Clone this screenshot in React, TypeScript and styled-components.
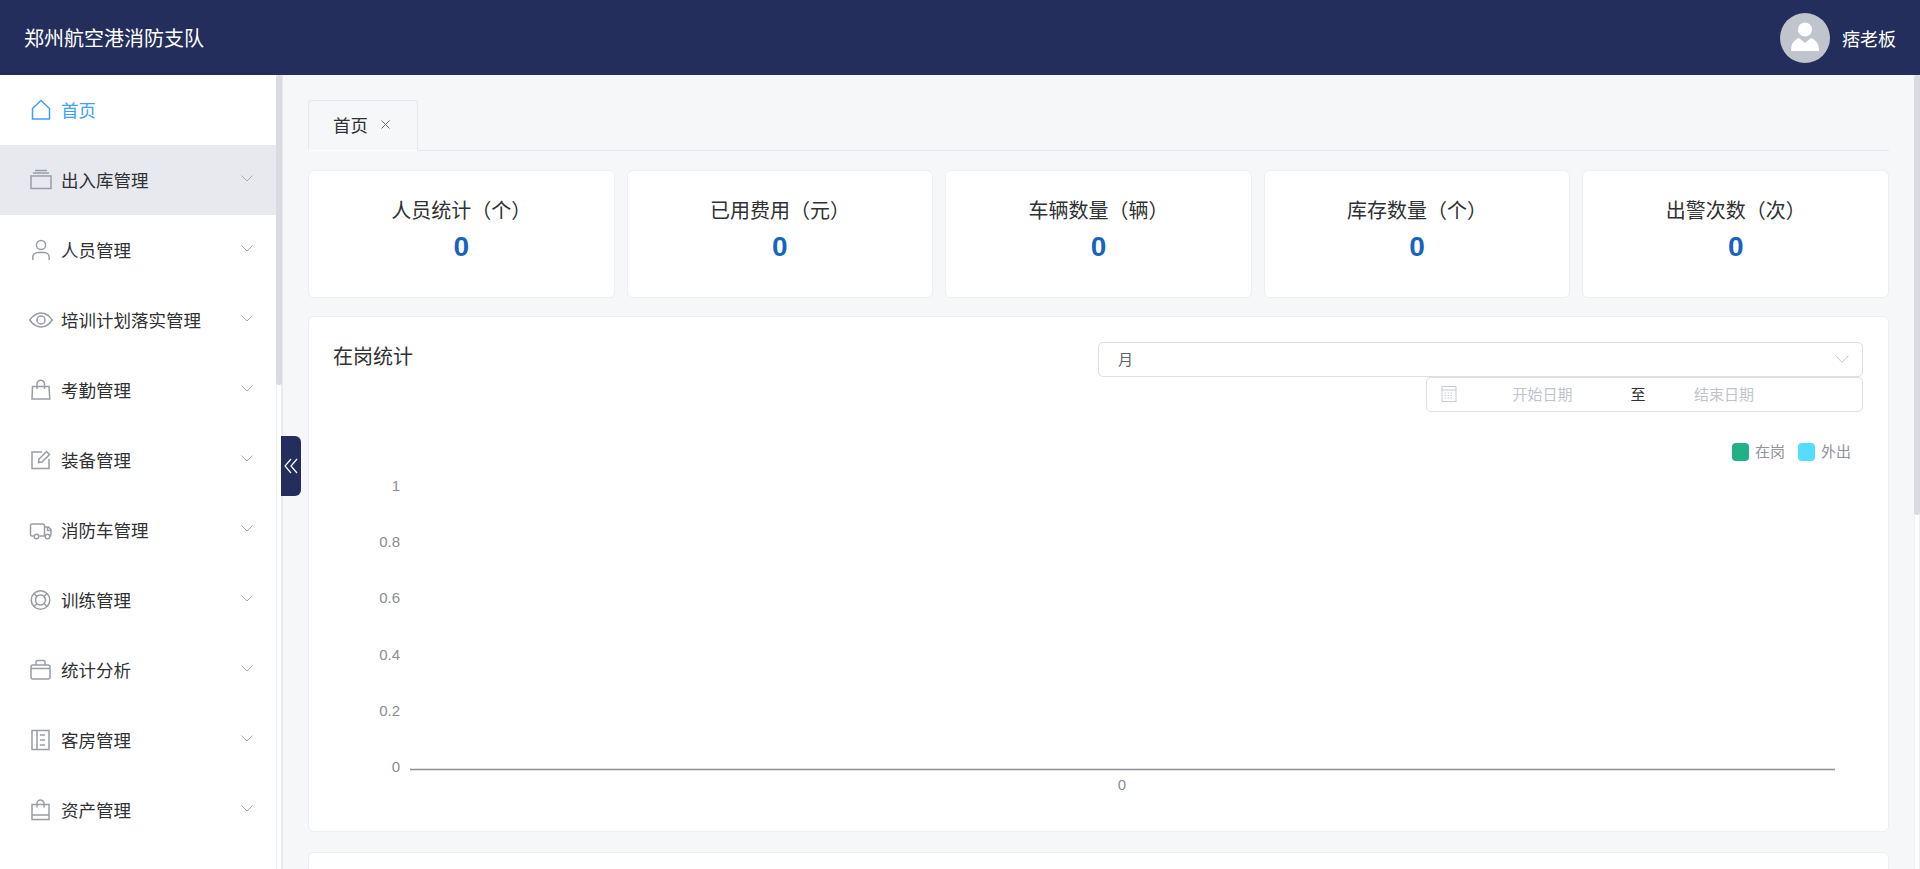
import React from "react";
import styled, { createGlobalStyle } from "styled-components";

const GlobalStyle = createGlobalStyle`
  html, body, #root {
    height: 100%;
    margin: 0;
  }
  body {
    overflow: hidden;
    font-family: "Liberation Sans", "Noto Sans CJK SC", sans-serif;
    color: #303133;
  }
  * {
    box-sizing: border-box;
  }
`;

const Svg: React.FC<{ children: React.ReactNode }> = ({ children }) => (
  <svg width={24} height={24} viewBox="0 0 24 24" fill="none" stroke="currentColor" strokeWidth="1.5">
    {children}
  </svg>
);

const icons: Record<string, React.ReactNode> = {
  home: <path d="M3.5 10.5 12 2.5l8.5 8v10.5h-17z" />,
  layers: (
    <>
      <rect x="2" y="8" width="20" height="12.500" />
      <path d="M4 5h16M6 2.500h12" />
    </>
  ),
  user: (
    <>
      <circle cx="12" cy="7" r="4.600" />
      <path d="M3.800 22v-2.500c0-3 2.400-5 5-5h6.400c2.600 0 5 2 5 5V22" />
    </>
  ),
  eye: (
    <>
      <path d="M0.800 12C4 7.300 7.700 5 12 5s8 2.300 11.200 7c-3.200 4.700-6.900 7-11.200 7S4 16.700 0.800 12z" />
      <circle cx="12" cy="12" r="4" />
    </>
  ),
  bag: (
    <>
      <path d="M3.500 8.500h16.500l.8 12.500H3z" />
      <path d="M8 11V6a3.700 3.700 0 0 1 7.500 0v5" />
    </>
  ),
  edit: (
    <>
      <path d="M13 4H3v16.500h17V11" />
      <path d="M9.500 14.500 10 11 17.500 3.500l3 3L13 14z" />
    </>
  ),
  truck: (
    <>
      <path d="M4.500 18H3a1.500 1.500 0 0 1-1.500-1.500v-9A1.500 1.500 0 0 1 3 6h11a1.500 1.500 0 0 1 1.500 1.500V18h-5" />
      <path d="M15.500 9h4l2.500 2.500v5a1.500 1.500 0 0 1-1.500 1.500M15.500 18h1M18.500 9v3.500H22" />
      <circle cx="7.500" cy="18.500" r="2.300" />
      <circle cx="18.500" cy="18.500" r="2.300" />
    </>
  ),
  buoy: (
    <>
      <circle cx="11.500" cy="12" r="9.300" />
      <circle cx="11.500" cy="12" r="5" />
      <path d="M5 5.500 8 8.500M18 5.500 15 8.500M5 18.500 8 15.500M18 18.500 15 15.500" />
    </>
  ),
  briefcase: (
    <>
      <rect x="2" y="7" width="19" height="14" rx="2" />
      <path d="M7 7V4a1.500 1.500 0 0 1 1.500-1.500h6A1.500 1.500 0 0 1 16 4v3M2 10.500h19" />
    </>
  ),
  book: (
    <>
      <rect x="3" y="2.500" width="17" height="19" />
      <path d="M8 2.500v19M11 7h5M11 12h5M11 17h5" />
    </>
  ),
  lockbag: (
    <>
      <rect x="3" y="6.500" width="17" height="15" />
      <path d="M8 9.500V5.500a3.500 3.500 0 0 1 7 0v4M3 17h17" />
    </>
  ),
};

const menu = [
  { icon: "home", label: "首页", active: true, arrow: false },
  { icon: "layers", label: "出入库管理", hover: true },
  { icon: "user", label: "人员管理" },
  { icon: "eye", label: "培训计划落实管理" },
  { icon: "bag", label: "考勤管理" },
  { icon: "edit", label: "装备管理" },
  { icon: "truck", label: "消防车管理" },
  { icon: "buoy", label: "训练管理" },
  { icon: "briefcase", label: "统计分析" },
  { icon: "book", label: "客房管理" },
  { icon: "lockbag", label: "资产管理" },
];

const stats = ["人员统计（个）", "已用费用（元）", "车辆数量（辆）", "库存数量（个）", "出警次数（次）"];
const yTicks = [
  { label: "1", y: 30 },
  { label: "0.8", y: 86 },
  { label: "0.6", y: 142 },
  { label: "0.4", y: 199 },
  { label: "0.2", y: 255 },
  { label: "0", y: 311 },
];

const App: React.FC = () => {
  return (
    <Page>
      <GlobalStyle />
      <Header>
        <Brand>郑州航空港消防支队</Brand>
        <Account>
          <Avatar>
            <svg width="50" height="50" viewBox="0 0 50 50">
              <circle cx="25" cy="16.500" r="7" fill="#fff" />
              <path d="M11 38c0-7 2.500-11 8-13l6 5 6-5c5.500 2 8 6 8 13z" fill="#fff" />
            </svg>
          </Avatar>
          <UserName>痞老板</UserName>
        </Account>
      </Header>
      <Body>
        <Sidebar>
          <MenuList>
            {menu.map((item) => (
              <MenuItem key={item.label} $active={item.active} $hover={item.hover}>
                <MenuIcon $active={item.active}>
                  <Svg>{icons[item.icon]}</Svg>
                </MenuIcon>
                <MenuLabel>{item.label}</MenuLabel>
                {item.arrow !== false && (
                  <Chevron width="12" height="7" viewBox="0 0 12 7">
                    <path d="M.5.5 6 6 11.500.5" />
                  </Chevron>
                )}
              </MenuItem>
            ))}
          </MenuList>
          <ScrollTrack>
            <ScrollThumb $height={310} />
          </ScrollTrack>
        </Sidebar>
        <Collapse>
          <svg width="14" height="16" viewBox="0 0 14 16" fill="none" stroke="#fff" strokeWidth="1.200">
            <path d="M7 1 1 8l6 7M13 1 7 8l6 7" />
          </svg>
        </Collapse>
        <Main>
          <TabStrip>
            <Tab>
              首页
              <TabClose width="9" height="9" viewBox="0 0 9 9">
                <path d="M.5.5l8 8M8.500.5l-8 8" />
              </TabClose>
            </Tab>
          </TabStrip>
          <StatRow>
            {stats.map((s) => (
              <StatCard key={s}>
                <StatTitle>{s}</StatTitle>
                <StatValue>0</StatValue>
              </StatCard>
            ))}
          </StatRow>
          <ChartCard>
            <ChartHead>
              <ChartTitle>在岗统计</ChartTitle>
              <Filters>
                <Select>
                  月
                  <svg width="14" height="8" viewBox="0 0 14 8" fill="none" stroke="#c0c4cc">
                    <path d="M.5.500 7 7.300 13.500.5" />
                  </svg>
                </Select>
                <DateRange>
                  <svg width="16" height="17" viewBox="0 0 16 17" fill="none" stroke="#c8cbd3">
                    <rect x="1" y="1.500" width="14" height="15" />
                    <path d="M1 5h14" />
                    <path d="M3.500 8h9M3.500 10.500h9M3.500 13h9" strokeDasharray="1.500 1.500" />
                  </svg>
                  <DatePlaceholder $width={171}>开始日期</DatePlaceholder>
                  <DateSep>至</DateSep>
                  <DatePlaceholder $width={152}>结束日期</DatePlaceholder>
                </DateRange>
              </Filters>
            </ChartHead>
            <Legend>
              <Swatch $color="#22b088" />
              在岗
              <Swatch $color="#55dcff" />
              外出
            </Legend>
            <ChartSvg viewBox="0 0 1528 360">
              {yTicks.map((t) => (
                <AxisText key={t.label} x="91" y={t.y} textAnchor="end">
                  {t.label}
                </AxisText>
              ))}
              <line x1="101" y1="308.500" x2="1526" y2="308.500" stroke="#8f9196" strokeWidth="1.500" />
              <AxisText x="813" y="329" textAnchor="middle">
                0
              </AxisText>
            </ChartSvg>
          </ChartCard>
          <NextCard />
        </Main>
        <ScrollTrack>
          <ScrollThumb $height={440} />
        </ScrollTrack>
      </Body>
    </Page>
  );
};

export default App;

const Page = styled.div`
  display: flex;
  flex-direction: column;
  height: 100%;
  position: relative;
`;

const Header = styled.header`
  flex: 0 0 75px;
  display: flex;
  align-items: center;
  justify-content: space-between;
  padding: 0 24px;
  background: #232e5c;
  color: #fff;
`;

const Brand = styled.div`
  font-size: 20px;
`;

const Account = styled.div`
  display: flex;
  align-items: center;
  gap: 12px;
`;

const Avatar = styled.div`
  width: 50px;
  height: 50px;
  border-radius: 50%;
  background: #c0c4cc;
  overflow: hidden;
  svg {
    display: block;
  }
`;

const UserName = styled.span`
  font-size: 18px;
`;

const Body = styled.div`
  flex: 1;
  display: flex;
  min-height: 0;
  position: relative;
`;

const Sidebar = styled.nav`
  flex: 0 0 283px;
  display: flex;
  background: #fff;
  border-right: 1px solid #e6e8ee;
`;

const MenuList = styled.div`
  flex: 1;
  min-width: 0;
`;

const ScrollTrack = styled.div`
  flex: 0 0 6px;
  background: #fff;
  border: solid #eceef2;
  border-width: 0 1px;
`;

const ScrollThumb = styled.div<{ $height: number }>`
  height: ${(p) => p.$height}px;
  margin: 0 -1px;
  background: #d9dbe1;
  border-radius: 3px;
`;

const MenuItem = styled.div<{ $active?: boolean; $hover?: boolean }>`
  height: 70px;
  display: flex;
  align-items: center;
  padding: 0 23px 0 29px;
  background: ${(p) => (p.$hover ? "#e8e9ee" : "#fff")};
  color: ${(p) => (p.$active ? "#409eff" : "#303133")};
`;

const MenuIcon = styled.span<{ $active?: boolean }>`
  flex: 0 0 24px;
  height: 24px;
  margin-right: 8px;
  color: ${(p) => (p.$active ? "#409eff" : "#9a9da6")};
  svg {
    display: block;
  }
`;

const MenuLabel = styled.span`
  flex: 1;
  padding-bottom: 2px;
  font-size: 17.500px;
`;

const Chevron = styled.svg`
  fill: none;
  stroke: #a8abb2;
  margin-top: -4px;
`;

const Collapse = styled.div`
  position: absolute;
  left: 281px;
  top: 361px;
  width: 20px;
  height: 60px;
  display: flex;
  align-items: center;
  justify-content: center;
  background: #232e5c;
  border-radius: 0 6px 6px 0;
`;

const Main = styled.main`
  flex: 1;
  min-width: 0;
  padding: 25px 25px 0;
  background: #f6f7f9;
  overflow: hidden;
`;

const TabStrip = styled.div`
  height: 51px;
  border-bottom: 1px solid #e6e8ef;
`;

const Tab = styled.div`
  width: 110px;
  height: 51px;
  display: flex;
  align-items: center;
  padding: 0 0 2px 24px;
  gap: 13px;
  font-size: 17.500px;
  color: #303133;
  border: 1px solid #e6e8ef;
  border-bottom-color: #fff;
  border-radius: 4px 4px 0 0;
`;

const TabClose = styled.svg`
  fill: none;
  stroke: #6b7080;
`;

const StatRow = styled.div`
  display: grid;
  grid-template-columns: repeat(5, 1fr);
  gap: 12px;
  margin-top: 19px;
`;

const StatCard = styled.div`
  height: 128px;
  padding-top: 25px;
  text-align: center;
  background: #fff;
  border: 1px solid #ebeef5;
  border-radius: 6px;
`;

const StatTitle = styled.div`
  font-size: 20px;
  line-height: 30px;
  color: #303133;
`;

const StatValue = styled.div`
  font-size: 28px;
  line-height: 36px;
  margin-top: 3px;
  font-weight: 700;
  color: #1565c0;
`;

const ChartCard = styled.section`
  height: 516px;
  margin-top: 18px;
  padding: 25px 25px 0 24px;
  background: #fff;
  border: 1px solid #ebeef5;
  border-radius: 6px;
`;

const ChartHead = styled.div`
  display: flex;
  justify-content: space-between;
  align-items: flex-start;
`;

const ChartTitle = styled.h2`
  margin: 0;
  font-size: 20px;
  font-weight: 400;
  line-height: 30px;
  color: #303133;
`;

const Filters = styled.div`
  width: 765px;
  display: flex;
  flex-direction: column;
  align-items: flex-end;
`;

const Select = styled.div`
  width: 100%;
  height: 35px;
  display: flex;
  align-items: center;
  justify-content: space-between;
  padding: 0 13px 2px 19px;
  font-size: 15px;
  color: #606266;
  border: 1px solid #dcdfe6;
  border-radius: 5px;
`;

const DateRange = styled.div`
  width: 437px;
  height: 35px;
  display: flex;
  align-items: center;
  padding: 0 0 2px 14px;
  font-size: 15px;
  border: 1px solid #dcdfe6;
  border-radius: 5px;
`;

const DatePlaceholder = styled.span<{ $width: number }>`
  width: ${(p) => p.$width}px;
  text-align: center;
  color: #c0c4cc;
`;

const DateSep = styled.span`
  width: 20px;
  text-align: center;
  color: #303133;
`;

const Legend = styled.div`
  display: flex;
  align-items: center;
  justify-content: flex-end;
  gap: 6px;
  margin-top: 31px;
  padding-right: 12px;
  font-size: 15px;
  line-height: 18px;
  color: #909399;
`;

const Swatch = styled.i<{ $color: string }>`
  width: 17px;
  height: 18px;
  margin-left: 7px;
  border-radius: 4px;
  background: ${(p) => p.$color};
`;

const ChartSvg = styled.svg`
  display: block;
  width: 1528px;
  height: 360px;
  margin: 0 -1px 0 -24px;
`;

const AxisText = styled.text`
  font-size: 15px;
  fill: #8a8d94;
`;

const NextCard = styled.section`
  height: 790px;
  margin-top: 20px;
  background: #fff;
  border: 1px solid #ebeef5;
  border-radius: 6px;
`;
